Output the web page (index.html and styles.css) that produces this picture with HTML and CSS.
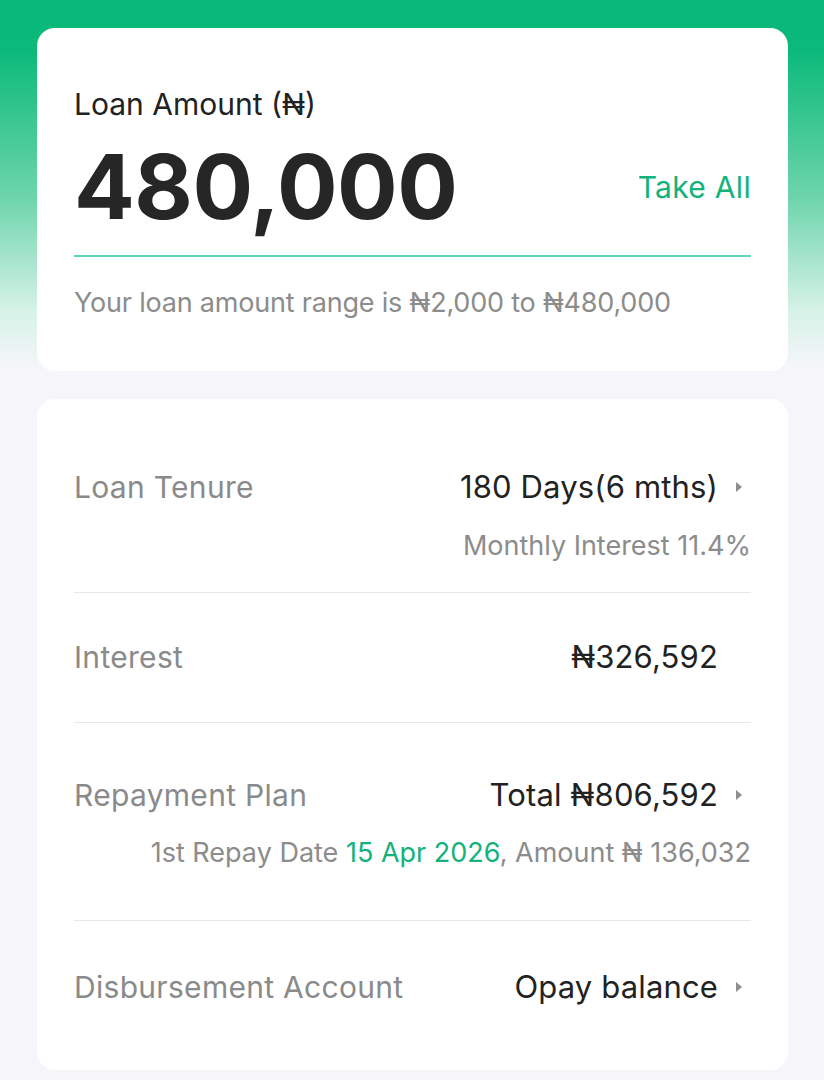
FILE: index.html
```html
<!DOCTYPE html>
<html lang="en">
<head>
<meta charset="utf-8">
<title>Loan</title>
<link rel="stylesheet" href="styles.css">
</head>
<body>
<div class="page">
  <section class="card amount-card">
    <div class="amount-label">Loan Amount (₦)</div>
    <div class="amount-row">
      <div class="amount">480,000</div>
      <div class="take-all">Take All</div>
    </div>
    <div class="amount-line"></div>
    <div class="range">Your loan amount range is ₦2,000 to ₦480,000</div>
  </section>

  <section class="card details-card">
    <div class="row row-tenure">
      <div class="row-main">
        <div class="row-label">Loan Tenure</div>
        <div class="row-value">180 Days(6 mths)<span class="caret"></span></div>
      </div>
      <div class="row-sub">Monthly Interest 11.4%</div>
    </div>
    <div class="row row-interest">
      <div class="row-main">
        <div class="row-label">Interest</div>
        <div class="row-value">₦326,592<span class="caret caret-hidden"></span></div>
      </div>
    </div>
    <div class="row row-plan">
      <div class="row-main">
        <div class="row-label">Repayment Plan</div>
        <div class="row-value">Total ₦806,592<span class="caret"></span></div>
      </div>
      <div class="row-sub">1st Repay Date <span class="green">15 Apr 2026</span>, Amount ₦ 136,032</div>
    </div>
    <div class="row row-account">
      <div class="row-main">
        <div class="row-label">Disbursement Account</div>
        <div class="row-value">Opay balance<span class="caret"></span></div>
      </div>
    </div>
  </section>
</div>
</body>
</html>
```

FILE: styles.css
```css
* { box-sizing: border-box; }

html, body {
  margin: 0;
  padding: 0;
}

body {
  background: #f6f6fa;
  font-family: Inter, "Noto Sans", "DejaVu Sans", sans-serif;
  color: #222222;
  width: 824px;
  height: 1080px;
  overflow: hidden;
}

.page {
  padding: 28px 36px 0 37px;
  background: linear-gradient(180deg, #0ab97a 0px, #0bba7a 50px, #6fd5ad 200px, #d6f2e7 310px, #f6f6fa 370px);
  background-repeat: no-repeat;
  background-size: 100% 400px;
  min-height: 1080px;
  display: flex;
  flex-direction: column;
  gap: 28px;
}

.card {
  background: #ffffff;
  border-radius: 18px;
  padding: 0 37px;
}

.amount-card {
  height: 343px;
  padding-top: 58px;
}

.amount-label {
  font-size: 30px;
  line-height: 36px;
  color: #222222;
}

.amount-row {
  display: flex;
  align-items: center;
  justify-content: space-between;
  height: 100px;
  margin-top: 15px;
}

.amount {
  font-size: 90px;
  font-weight: 700;
  line-height: 100px;
  color: #262626;
  letter-spacing: -0.5px;
}

.take-all {
  font-size: 30px;
  line-height: 36px;
  letter-spacing: 0.3px;
  color: #13b27a;
}

.amount-line {
  height: 2px;
  background: #5cd6b6;
  margin-top: 18px;
}

.range {
  font-size: 27px;
  line-height: 32px;
  letter-spacing: -0.2px;
  color: #8c8c8c;
  margin-top: 30px;
}

.details-card {
  height: 671px;
}

.row {
  border-bottom: 1px solid #e8e8ea;
}

.row:last-child {
  border-bottom: none;
}

.row-main {
  display: flex;
  align-items: center;
  justify-content: space-between;
  height: 36px;
}

.row-label {
  font-size: 30px;
  line-height: 36px;
  letter-spacing: 0.3px;
  color: #8a8a8a;
}

.row-value {
  display: flex;
  align-items: center;
  font-size: 31px;
  line-height: 36px;
  letter-spacing: 0.15px;
  color: #222222;
}

.caret {
  width: 33px;
  height: 10px;
  display: inline-block;
  position: relative;
}

.caret::after {
  content: "";
  position: absolute;
  left: 18px;
  top: 0;
  border-left: 6px solid #8e8e8e;
  border-top: 5px solid transparent;
  border-bottom: 5px solid transparent;
}

.caret-hidden::after {
  display: none;
}

.row-sub {
  font-size: 27px;
  line-height: 32px;
  color: #8c8c8c;
  text-align: right;
}

.green {
  color: #13b27a;
}

.row-tenure {
  padding: 70px 0 30px;
}

.row-tenure .row-sub {
  margin-top: 25px;
}

.row-interest {
  padding: 46px 0 47px;
}

.row-plan {
  padding: 54px 0 51px;
}

.row-plan .row-sub {
  margin-top: 24px;
}

.row-account {
  padding: 48px 0 0;
}
```
